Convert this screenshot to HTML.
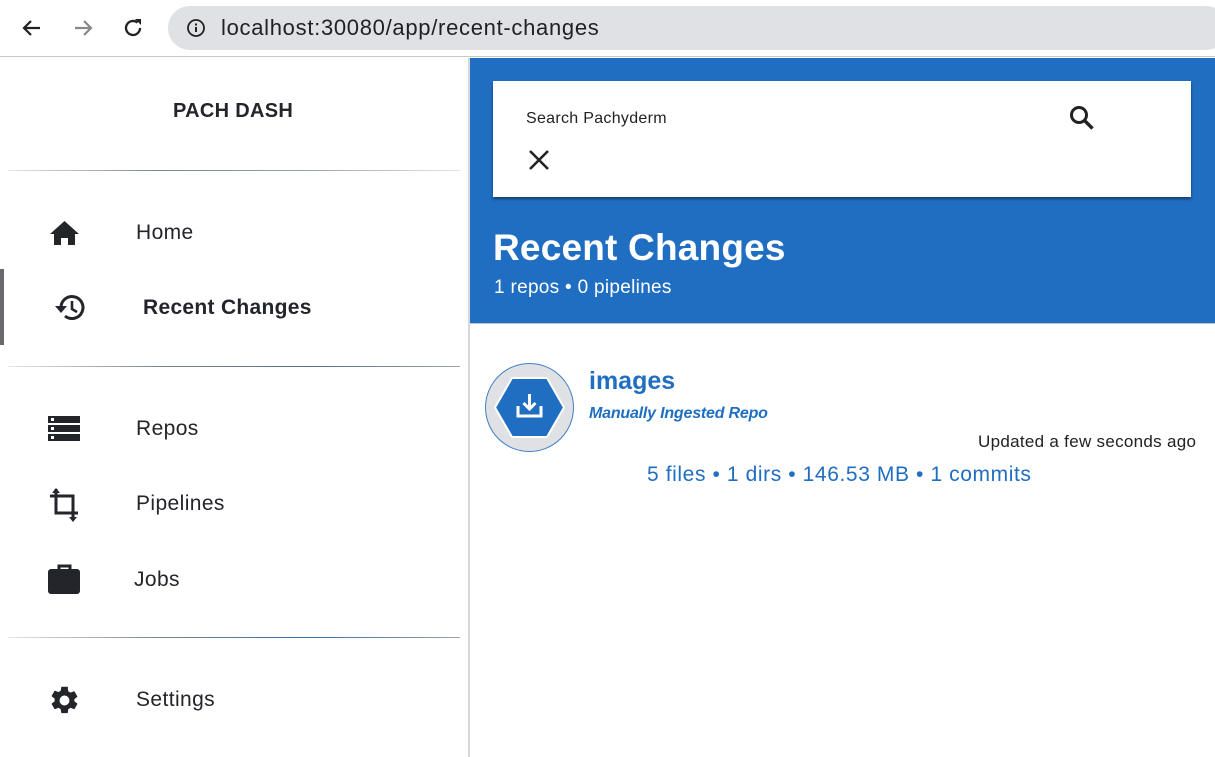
<!DOCTYPE html>
<html><head><meta charset="utf-8"><style>
*{margin:0;padding:0;box-sizing:border-box}
body{width:1215px;height:757px;overflow:hidden;background:#fff;font-family:"Liberation Sans",sans-serif;color:#23252b;position:relative}
.abs{position:absolute}
.t{position:absolute;white-space:nowrap}
</style></head><body>
<div class="abs" style="left:0;top:0;width:1215px;height:57px;background:#fff;border-bottom:1px solid #c8c8c8"></div>
<svg class="abs" style="left:20px;top:16px" width="24" height="24" viewBox="0 0 24 24"><path d="M20 12H5M11 5l-7 7 7 7" stroke="#222" stroke-width="2.2" fill="none"/></svg>
<svg class="abs" style="left:71px;top:16px" width="24" height="24" viewBox="0 0 24 24"><path d="M4 12h15M13 5l7 7-7 7" stroke="#888" stroke-width="2.2" fill="none"/></svg>
<svg class="abs" style="left:121px;top:16px" width="24" height="24" viewBox="0 0 24 24"><path d="M19 12a7 7 0 1 1-2.5-5.4" stroke="#222" stroke-width="2.3" fill="none"/><path d="M14 3h6v6z" fill="#222"/></svg>
<div class="abs" style="left:168px;top:6px;width:1060px;height:44px;border-radius:22px;background:#dfe1e5"></div>
<svg class="abs" style="left:186px;top:18px" width="20" height="20" viewBox="0 0 20 20"><circle cx="10" cy="10" r="8" stroke="#222" stroke-width="1.8" fill="none"/><rect x="9" y="9" width="2" height="5" fill="#222"/><rect x="9" y="5.5" width="2" height="2" fill="#222"/></svg>
<div class="t" style="left:221px;top:15px;font-size:22px;letter-spacing:0.7px;color:#202124">localhost:30080/app/recent-changes</div>

<div class="abs" style="left:468px;top:58px;width:2px;height:699px;background:#d8d8d8"></div>
<div class="t" style="left:173px;top:100px;font-size:20px;font-weight:bold;letter-spacing:0.3px">PACH DASH</div>
<div class="abs" style="left:8px;top:170px;width:452px;height:1px;background:linear-gradient(90deg,#e4e6e8,#7c8590,#9aa2aa,#e4e6e8)"></div>
<div class="abs" style="left:8px;top:366px;width:452px;height:1px;background:linear-gradient(90deg,#e4e6e8,#7c8590,#556e8a,#9aa2aa)"></div>
<div class="abs" style="left:8px;top:637px;width:452px;height:1px;background:linear-gradient(90deg,#e4e6e8,#7c8590,#3a6ea8,#9aa2aa)"></div>
<div class="abs" style="left:0;top:269px;width:4px;height:76px;background:#6a6a6e"></div>

<svg class="abs" style="left:49px;top:219px" width="31" height="28" viewBox="0 0 31 28"><path d="M15.5 2L1 15h4v11h7v-7h7v7h7V15h4z" fill="#23252b"/></svg>
<div class="t" style="left:136px;top:221px;font-size:21px;letter-spacing:0.4px">Home</div>
<svg class="abs" style="left:53px;top:291px" width="35" height="32" viewBox="0 0 35 32"><path d="M8 17A11 11 0 1 1 12 25" stroke="#23252b" stroke-width="3" fill="none"/><path d="M2 15h12l-6 7z" fill="#23252b"/><path d="M19 10v8l5 3" stroke="#23252b" stroke-width="2.6" fill="none"/></svg>
<div class="t" style="left:143px;top:296px;font-size:21px;font-weight:bold;letter-spacing:0.3px">Recent Changes</div>

<svg class="abs" style="left:48px;top:416px" width="33" height="26" viewBox="0 0 33 26"><rect x="0" y="0" width="32" height="7" fill="#23252b"/><rect x="0" y="9" width="32" height="7" fill="#23252b"/><rect x="0" y="18" width="32" height="7" fill="#23252b"/><rect x="3" y="2" width="3" height="3" fill="#fff"/><rect x="3" y="11" width="3" height="3" fill="#fff"/><rect x="3" y="20" width="3" height="3" fill="#fff"/></svg>
<div class="t" style="left:136px;top:417px;font-size:21px;letter-spacing:0.4px">Repos</div>
<svg class="abs" style="left:48px;top:487px" width="34" height="36" viewBox="0 0 34 36"><path d="M8 2v24h22" stroke="#23252b" stroke-width="3" fill="none"/><path d="M2 9h23v23" stroke="#23252b" stroke-width="3" fill="none"/><path d="M4 6l4-5 4 5z" fill="#23252b"/><path d="M21 30l4 5 4-5z" fill="#23252b"/></svg>
<div class="t" style="left:136px;top:492px;font-size:21px;letter-spacing:0.4px">Pipelines</div>
<svg class="abs" style="left:48px;top:563px" width="33" height="32" viewBox="0 0 33 32"><path d="M11 6V3h11v3" stroke="#23252b" stroke-width="3" fill="none"/><rect x="0" y="6" width="32" height="25" rx="3" fill="#23252b"/></svg>
<div class="t" style="left:134px;top:568px;font-size:21px;letter-spacing:0.4px">Jobs</div>
<svg class="abs" style="left:48px;top:684px" width="33" height="33" viewBox="0 0 24 24"><path fill="#23252b" d="M19.14 12.94c.04-.3.06-.61.06-.94s-.02-.64-.07-.94l2.03-1.58a.49.49 0 0 0 .12-.61l-1.920-3.32a.49.49 0 0 0-.59-.22l-2.39.96c-.5-.38-1.03-.7-1.62-.94l-.36-2.54A.48.48 0 0 0 13.92 2h-3.84a.48.48 0 0 0-.48.41l-.36 2.54c-.59.24-1.13.57-1.62.94l-2.39-.96a.48.48 0 0 0-.59.22L2.72 8.47a.47.47 0 0 0 .12.61l2.03 1.58c-.05.3-.07.62-.07.94s.02.64.07.94l-2.03 1.58a.49.49 0 0 0-.12.61l1.920 3.32c.12.22.37.29.59.22l2.39-.96c.5.38 1.03.7 1.62.94l.36 2.54c.05.24.24.41.48.41h3.84c.24 0 .44-.17.47-.41l.36-2.54c.59-.24 1.13-.56 1.62-.94l2.39.96c.22.08.47 0 .59-.22l1.920-3.32a.47.47 0 0 0-.12-.61l-2.01-1.58zM12 15.6A3.6 3.6 0 1 1 12 8.4a3.6 3.6 0 0 1 0 7.2z"/></svg>
<div class="t" style="left:136px;top:688px;font-size:21px;letter-spacing:0.4px">Settings</div>

<div class="abs" style="left:470px;top:58px;width:745px;height:266px;background:#206ec2;border-bottom:1px solid #b8c6d4"></div>
<div class="abs" style="left:493px;top:81px;width:698px;height:116px;background:#fff;box-shadow:0 2px 3px rgba(0,0,0,.45)"></div>
<div class="t" style="left:526px;top:110px;font-size:16px;letter-spacing:0.3px;color:#222">Search Pachyderm</div>
<svg class="abs" style="left:528px;top:149px" width="22" height="22" viewBox="0 0 22 22"><path d="M2 2l18 18M20 2L2 20" stroke="#222" stroke-width="2.6"/></svg>
<svg class="abs" style="left:1068px;top:104px" width="30" height="30" viewBox="0 0 30 30"><circle cx="11" cy="11" r="7.5" stroke="#222" stroke-width="3" fill="none"/><path d="M16.5 16.5l8 8" stroke="#222" stroke-width="3.4"/></svg>
<div class="t" style="left:493px;top:227px;font-size:37px;font-weight:bold;color:#fff;letter-spacing:0.2px">Recent Changes</div>
<div class="t" style="left:494px;top:277px;font-size:19px;letter-spacing:0.3px;color:#fff">1 repos • 0 pipelines</div>

<svg class="abs" style="left:484px;top:362px" width="91" height="91" viewBox="0 0 91 91"><circle cx="45.5" cy="45.5" r="44" fill="#dfe1e4" stroke="#3d7ec6" stroke-width="1"/><path d="M28 16h35l17 29.5-17 29.5H28L11 45.5z" fill="#206ec2" stroke="#fff" stroke-width="2"/><path d="M45.5 32v15M39.5 41l6 6 6-6" stroke="#fff" stroke-width="3" fill="none"/><path d="M34 44v10h23V44" stroke="#fff" stroke-width="3" fill="none"/></svg>
<div class="t" style="left:589px;top:367px;font-size:25px;font-weight:bold;color:#206ec2">images</div>
<div class="t" style="left:589px;top:405px;font-size:16px;font-style:italic;font-weight:bold;letter-spacing:-0.2px;color:#206ec2">Manually Ingested Repo</div>
<div class="t" style="left:978px;top:432px;font-size:17px;letter-spacing:0.3px;color:#222">Updated a few seconds ago</div>
<div class="t" style="left:647px;top:463px;font-size:21px;letter-spacing:0.6px;color:#206ec2">5 files • 1 dirs • 146.53 MB • 1 commits</div>
</body></html>
